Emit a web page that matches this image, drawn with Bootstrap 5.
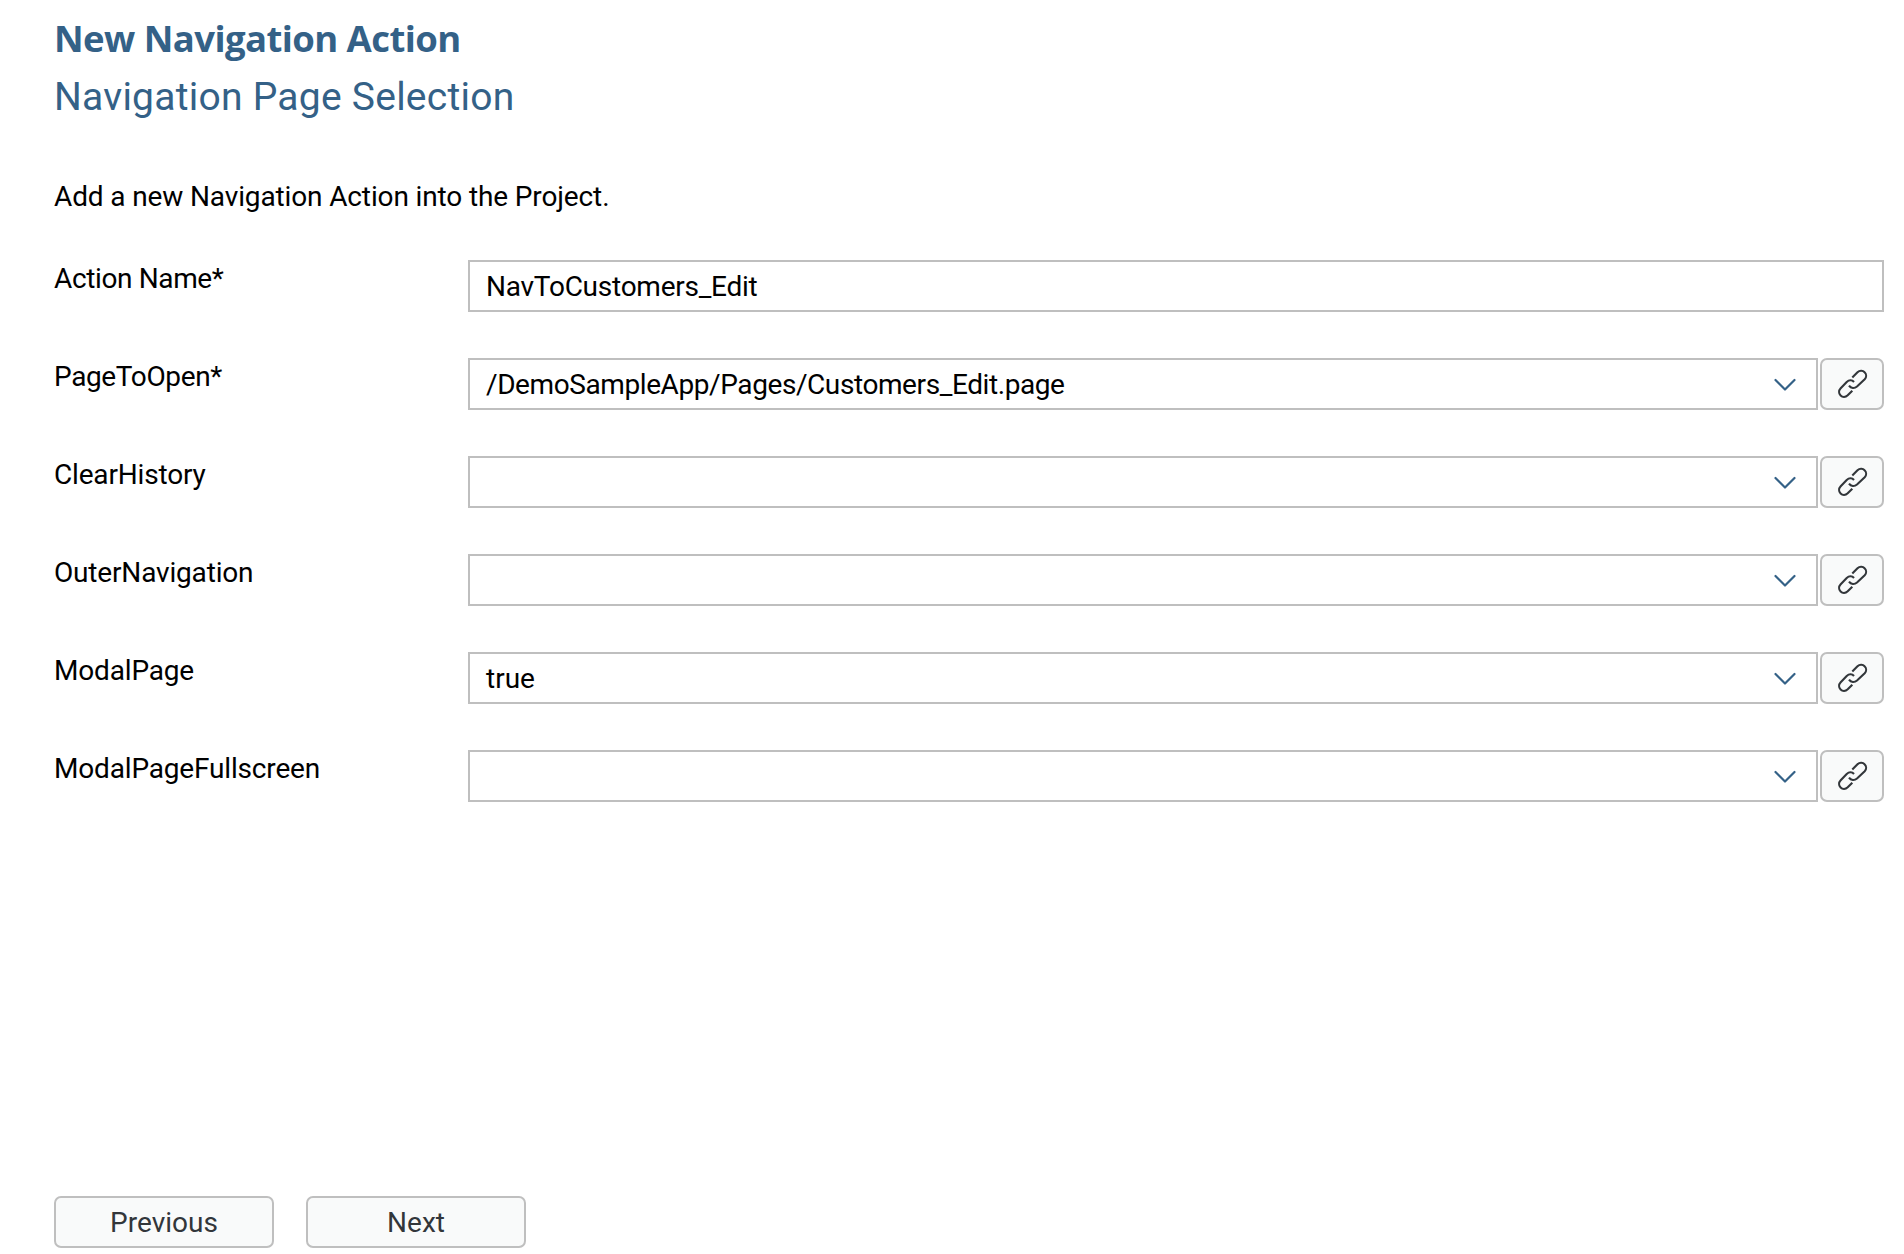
<!DOCTYPE html>
<html lang="en"><head><meta charset="utf-8"><title>New Navigation Action</title>
<link href="https://cdn.jsdelivr.net/npm/bootstrap@5.3.0/dist/css/bootstrap.min.css" rel="stylesheet">
<style>
body{font-family:Roboto,"Liberation Sans",sans-serif;font-size:28px;line-height:32px;color:#000;background:#fff}
.wizard-page{height:1254px;padding:16px 20px 6px 54px}
.wizard-title,.wizard-subtitle{color:#346187}
.wizard-title{font-family:"Open Sans",Roboto,sans-serif;font-size:36.5px;line-height:44px;font-weight:700;letter-spacing:-.58px}
.wizard-subtitle{font-size:39px;line-height:46px;margin-top:14px;letter-spacing:.25px}
.wizard-intro{margin-top:61px;letter-spacing:-.13px}
.wizard-fields{margin-top:47px;gap:46px}
.field-label{width:414px;padding-top:3px;letter-spacing:-.17px}
.required-label{letter-spacing:-.37px}
.field-box{height:52px;border:2px solid #bfbfbf;padding:0 16px;line-height:50px;letter-spacing:-.25px}
.combo-box{border:2px solid #bfbfbf;height:52px;padding:0 19px 0 16px;line-height:32px;margin-right:2px}
.combo-box span{padding-top:2px}
.path-value{letter-spacing:-.41px}
.combo-box svg{width:24px;height:16px;margin-top:1px}
.soft-btn{border:2px solid #bfbfbf;border-radius:7px;background:#f9fafa;color:#32363a;height:52px;font-size:28px;line-height:32px;padding:1px 0 0}
.nav-btn{width:220px}
.nav-gap{gap:32px}
.bind-btn{width:64px;padding:0}
.bind-btn svg{width:40px;height:40px;display:block;margin:0 auto}
</style></head><body>
<svg width="0" height="0" class="d-none"><defs>
<symbol id="link" viewBox="0 0 40 40"><g fill="none" stroke="#32363a" stroke-width="2.1"><path d="M20.300 13.500 25.500 8.300C28 5.800 31 6.600 32.600 8.300C34.600 10.300 34.600 13.300 32.700 15.300L25 22.500C22.500 24.700 19 24.500 17 21.700"/><path d="M22 18C20 15.600 17 15.800 14.700 18L8.700 24.300C6.600 26.500 6.600 29.500 8.600 31.500C10.600 33.500 13.500 33.400 15.700 31.300L20.300 26.700"/></g></symbol>
<symbol id="down" viewBox="0 0 24 16"><path d="M2.500 3 12 12.500 21.500 3" fill="none" stroke="#346187" stroke-width="2.2" stroke-linecap="round" stroke-linejoin="round"/></symbol>
</defs></svg>
<main class="wizard-page d-flex flex-column">
<h1 class="wizard-title mb-0">New Navigation Action</h1>
<h2 class="wizard-subtitle mb-0 fw-normal">Navigation Page Selection</h2>
<p class="wizard-intro mb-0">Add a new Navigation Action into the Project.</p>
<form class="wizard-fields d-flex flex-column">
<div class="d-flex"><label class="field-label required-label">Action Name*</label><div class="field-box flex-fill">NavToCustomers_Edit</div></div>
<div class="d-flex"><label class="field-label required-label">PageToOpen*</label><div class="combo-box flex-fill d-flex align-items-center justify-content-between"><span class="path-value">/DemoSampleApp/Pages/Customers_Edit.page</span><svg><use href="#down"/></svg></div><button type="button" class="btn soft-btn bind-btn" aria-label="Bind"><svg><use href="#link"/></svg></button></div>
<div class="d-flex"><label class="field-label">ClearHistory</label><div class="combo-box flex-fill d-flex align-items-center justify-content-between"><span></span><svg><use href="#down"/></svg></div><button type="button" class="btn soft-btn bind-btn" aria-label="Bind"><svg><use href="#link"/></svg></button></div>
<div class="d-flex"><label class="field-label">OuterNavigation</label><div class="combo-box flex-fill d-flex align-items-center justify-content-between"><span></span><svg><use href="#down"/></svg></div><button type="button" class="btn soft-btn bind-btn" aria-label="Bind"><svg><use href="#link"/></svg></button></div>
<div class="d-flex"><label class="field-label">ModalPage</label><div class="combo-box flex-fill d-flex align-items-center justify-content-between"><span>true</span><svg><use href="#down"/></svg></div><button type="button" class="btn soft-btn bind-btn" aria-label="Bind"><svg><use href="#link"/></svg></button></div>
<div class="d-flex"><label class="field-label">ModalPageFullscreen</label><div class="combo-box flex-fill d-flex align-items-center justify-content-between"><span></span><svg><use href="#down"/></svg></div><button type="button" class="btn soft-btn bind-btn" aria-label="Bind"><svg><use href="#link"/></svg></button></div>
</form>
<div class="mt-auto d-flex nav-gap"><button type="button" class="btn soft-btn nav-btn">Previous</button><button type="button" class="btn soft-btn nav-btn">Next</button></div>
</main>
<script src="https://cdn.jsdelivr.net/npm/bootstrap@5.3.0/dist/js/bootstrap.bundle.min.js"></script>
</body></html>
